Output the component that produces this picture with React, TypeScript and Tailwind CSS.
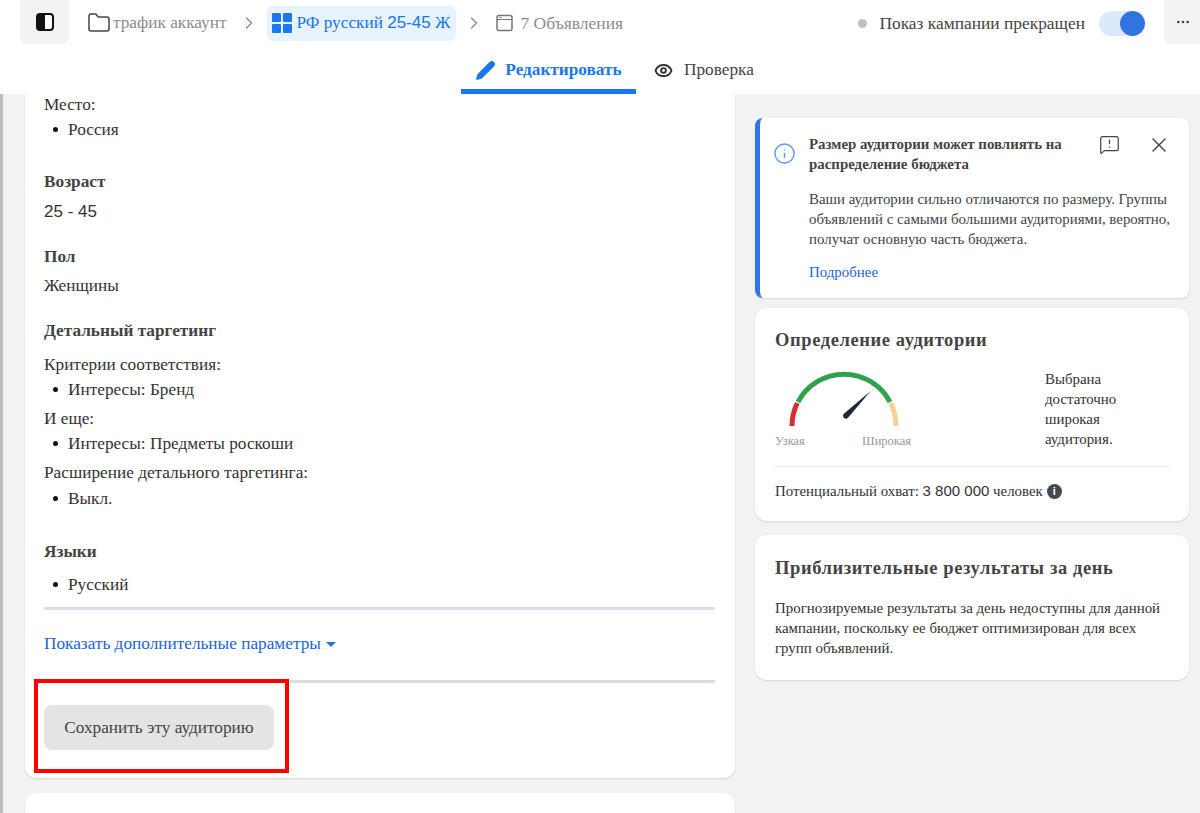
import { ChevronRight, Eye, Folder, Info, MessageSquareWarning, MoreHorizontal, Pencil, X } from 'lucide-react';

const serif = { fontFamily: '"Liberation Serif", serif' };

function Bullet({ children }: { children: React.ReactNode }) {
  return (
    <div className="flex h-[25px] items-center pl-[9px] text-[#333]">
      <span className="mr-[10px] h-[5px] w-[5px] rounded-full bg-[#111]" />
      <span>{children}</span>
    </div>
  );
}

function Heading({ children, className }: { children: React.ReactNode; className?: string }) {
  return <div className={`h-[25px] font-bold leading-[25px] text-[#444] ${className ?? ''}`}>{children}</div>;
}

function Line({ children, className }: { children: React.ReactNode; className?: string }) {
  return <div className={`h-[25px] leading-[25px] text-[#333] ${className ?? ''}`}>{children}</div>;
}

function Gauge() {
  return (
    <svg width="136" height="56" viewBox="0 0 136 56" className="block">
      <g fill="none" strokeWidth="5">
        <path d="M17 55 A 52 52 0 0 1 22.300 32" stroke="#d32f34" />
        <path d="M23 31 A 52 52 0 0 1 115 31" stroke="#31a24c" />
        <path d="M115.700 32 A 52 52 0 0 1 121 55" stroke="#f7d099" />
      </g>
      <path d="M95.700 20 L72.800 47.100 A3 3 0 0 1 68.600 42.900 Z" fill="#1c2b33" />
    </svg>
  );
}

export default function App() {
  return (
    <div className="flex h-[813px] w-[1200px] flex-col overflow-hidden bg-white text-[17.250px]" style={serif}>
      <header className="h-[94px] shrink-0 whitespace-nowrap bg-white">
        <div className="flex h-[46px] items-center pl-[20px]">
          <div className="flex h-[44px] w-[49px] items-center justify-center self-start rounded-b-md bg-[#f2f2f2]">
            <svg width="18" height="18" viewBox="0 0 18 18">
              <rect x="1" y="1" width="16" height="16" rx="3" fill="#fff" stroke="#111" strokeWidth="2" />
              <path d="M3 1h6v16H3a2 2 0 0 1-2-2V3a2 2 0 0 1 2-2z" fill="#111" />
            </svg>
          </div>
          <Folder className="ml-[18px] h-[24px] w-[24px] text-[#444]" strokeWidth={1.5} />
          <span className="ml-[2px] text-[#8a8d91]">трафик аккаунт</span>
          <ChevronRight className="ml-[13px] h-[20px] w-[20px] text-[#8a8d91]" strokeWidth={1.6} />
          <div className="ml-[8px] flex h-[35px] w-[189px] items-center rounded-md bg-[#e7f3ff] pl-[5px] text-[#1877f2]">
            <div className="grid grid-cols-2 gap-[2px]">
              <span className="h-[9px] w-[9px] rounded-[1px] bg-[#1877f2]" />
              <span className="h-[9px] w-[9px] rounded-[1px] bg-[#1877f2]" />
              <span className="h-[9px] w-[9px] rounded-[1px] bg-[#1877f2]" />
              <span className="h-[9px] w-[9px] rounded-[1px] bg-[#1877f2]" />
            </div>
            <span className="ml-[4px]">РФ русский <span className="font-['Liberation_Sans'] text-[17px]">25-45</span> Ж</span>
          </div>
          <ChevronRight className="ml-[8px] h-[20px] w-[20px] text-[#8a8d91]" strokeWidth={1.6} />
          <svg width="17" height="18" viewBox="0 0 17 18" className="ml-[12px] text-[#777]">
            <rect x="1" y="1.500" width="15" height="15" rx="2" fill="none" stroke="currentColor" strokeWidth="1.500" />
            <path d="M1 5.500h15M3.500 3.500h2" stroke="currentColor" strokeWidth="1.200" />
          </svg>
          <span className="ml-[7px] text-[17.500px] text-[#8a8d91]">7 Объявления</span>
          <span className="ml-auto h-[9px] w-[9px] rounded-full bg-[#bcc0c4]" />
          <span className="ml-[12px] text-[17.400px] text-[#444]">Показ кампании прекращен</span>
          <div className="ml-[14px] flex h-[25px] w-[45px] items-center justify-end rounded-full bg-[#dbe9fb]">
            <span className="mr-[-1px] h-[25px] w-[25px] rounded-full bg-[#2f74e0]" />
          </div>
          <div className="ml-[20px] flex h-[44px] w-[36px] items-center self-start rounded-bl-md bg-[#f2f2f2] pl-[11px]">
            <MoreHorizontal className="h-[16px] w-[16px] text-[#444]" />
          </div>
        </div>
        <div className="flex h-[48px] pl-[461px]">
          <div className="flex h-[48px] w-[175px] flex-col text-[#1877f2]">
            <div className="flex flex-1 items-center justify-center pt-[5px]">
              <Pencil className="h-[21px] w-[21px] fill-[#1877f2]" strokeWidth={1.5} />
              <span className="ml-[9px] font-bold">Редактировать</span>
            </div>
            <div className="h-[5px] bg-[#1877f2]" />
          </div>
          <div className="ml-[18px] flex h-[48px] items-center text-[#444]">
            <Eye className="h-[19px] w-[19px] text-[#333]" strokeWidth={2.4} />
            <span className="ml-[11px]">Проверка</span>
          </div>
        </div>
      </header>

      <div className="flex min-h-0 flex-1 bg-[#f2f2f2]">
        <div className="w-[3px] shrink-0 bg-[#bdbdbd]" />
        <main className="ml-[22px] w-[710px] shrink-0">
          <section className="rounded-b-xl bg-white pb-[28px] pl-[19px] pr-[20px] shadow-[0_1px_2px_rgba(0,0,0,0.12)]">
            <div className="h-[23px] leading-[21px] text-[#333]">Место:</div>
            <Bullet>Россия</Bullet>
            <Heading className="mt-[27px]">Возраст</Heading>
            <Line className="mt-[5px] font-['Liberation_Sans'] text-[17px]">25 - 45</Line>
            <Heading className="mt-[20px]">Пол</Heading>
            <Line className="mt-[4px]">Женщины</Line>
            <Heading className="mt-[20px]">Детальный таргетинг</Heading>
            <Line className="mt-[9px]">Критерии соответствия:</Line>
            <Bullet>Интересы: Бренд</Bullet>
            <Line className="mt-[4px]">И еще:</Line>
            <Bullet>Интересы: Предметы роскоши</Bullet>
            <Line className="mt-[4px]">Расширение детального таргетинга:</Line>
            <div className="pt-[1px]">
              <Bullet>Выкл.</Bullet>
            </div>
            <Heading className="mt-[28px]">Языки</Heading>
            <div className="pt-[8px]">
              <Bullet>Русский</Bullet>
            </div>
            <div className="mt-[10px] h-[3px] bg-[#dadde6]" />
            <div className="mt-[21px] flex h-[25px] items-center text-[#1a66d6]">
              Показать дополнительные параметры
              <span className="ml-[5px] mt-[2px] border-x-[5px] border-t-[5px] border-x-transparent border-t-[#2f6fd0]" />
            </div>
            <div className="relative mt-[24px] pt-[25px]">
              <div className="absolute left-0 right-0 top-0 h-[3px] bg-[#dadde6]" />
              <button type="button" className="h-[45px] w-[230px] rounded-lg bg-[#e4e4e4] text-[#444]">
                Сохранить эту аудиторию
              </button>
              <div className="pointer-events-none absolute -left-[10px] -top-[1px] h-[94px] w-[255px] border-4 border-[#ff0000]" />
            </div>
          </section>
          <section className="mt-[15px] h-[40px] rounded-t-xl bg-white shadow-[0_1px_2px_rgba(0,0,0,0.12)]" />
        </main>

        <aside className="ml-[20px] mt-[24px] flex w-[434px] shrink-0 flex-col">
          <section className="flex h-[180px] rounded-lg border-l-[5px] border-[#2f74e0] bg-white shadow-[0_1px_2px_rgba(0,0,0,0.12)]">
            <Info className="ml-[13px] mt-[24px] h-[23px] w-[23px] shrink-0 text-[#5b9bf0]" strokeWidth={1.5} />
            <div className="ml-[13px] w-[360px] whitespace-nowrap pt-[16px] text-[14.900px] leading-[20px] text-[#444]">
              <div className="relative font-bold">
                Размер аудитории может повлиять на<br />распределение бюджета
                <MessageSquareWarning className="absolute right-0 top-0 mr-[49px] h-[21px] w-[21px]" strokeWidth={1.4} />
                <X className="absolute -right-[2px] -top-[1px] h-[24px] w-[24px]" strokeWidth={1.4} />
              </div>
              <p className="mt-[15px]">
                Ваши аудитории сильно отличаются по размеру. Группы<br />объявлений с самыми большими аудиториями, вероятно,<br />получат основную часть бюджета.
              </p>
              <p className="mt-[13px] text-[#1a66d6]">Подробнее</p>
            </div>
          </section>

          <section className="mt-[10px] h-[213px] rounded-xl bg-white px-[20px] pt-[20px] shadow-[0_1px_2px_rgba(0,0,0,0.12)]">
            <h2 className="text-[18.500px] font-bold leading-[24px] tracking-[0.6px] text-[#444]">Определение аудитории</h2>
            <div className="mt-[19px] flex h-[95px]">
              <div className="w-[270px]">
                <Gauge />
                <div className="mt-[7px] flex w-[136px] justify-between text-[12.500px] leading-[14px] text-[#999]">
                  <span>Узкая</span>
                  <span>Широкая</span>
                </div>
              </div>
              <p className="-mt-[2px] text-[14.900px] leading-[20px] text-[#333]">Выбрана<br />достаточно<br />широкая<br />аудитория.</p>
            </div>
            <div className="border-t border-[#e4e6eb] pt-[13px] text-[14.900px] leading-[22px] text-[#333]">
              Потенциальный охват: <span className="font-['Liberation_Sans'] text-[15px]">3 800 000</span> человек
              <span className="relative top-[-1px] ml-[4px] inline-flex h-[15px] w-[15px] items-center justify-center rounded-full bg-[#444950] align-middle font-['Liberation_Sans'] text-[11px] font-bold leading-none text-white">i</span>
            </div>
          </section>

          <section className="mt-[14px] h-[145px] rounded-xl bg-white px-[20px] pt-[21px] shadow-[0_1px_2px_rgba(0,0,0,0.12)]">
            <h2 className="text-[18.500px] font-bold leading-[24px] tracking-[0.6px] text-[#444]">Приблизительные результаты за день</h2>
            <p className="mt-[18px] text-[14.900px] leading-[20px] text-[#333]">
              Прогнозируемые результаты за день недоступны для данной кампании, поскольку ее бюджет оптимизирован для всех групп объявлений.
            </p>
          </section>
        </aside>
      </div>
    </div>
  );
}
